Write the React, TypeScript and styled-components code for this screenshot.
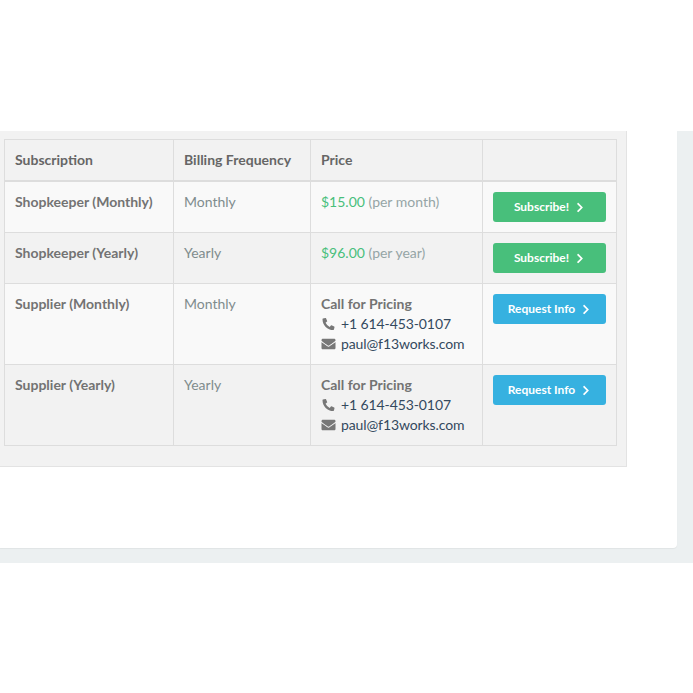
import { createGlobalStyle } from 'styled-components';
import styled from 'styled-components';
import { FaChevronRight, FaEnvelope, FaPhoneAlt } from 'react-icons/fa';

const BORDER = '#dddddd';
const GREEN = '#48bf7b';
const BLUE = '#36b1e0';

const GlobalStyle = createGlobalStyle`
  html, body {
    margin: 0;
    padding: 0;
    background: #ffffff;
  }

  body {
    font-family: Lato, 'Open Sans', sans-serif;
    font-size: 14px;
    line-height: 20px;
    color: #34495e;
  }
`;

const Section = styled.div`
  margin-top: 131px;
  padding: 0 16px 15px 0;
  background-color: #ecf0f1;
`;

const Card = styled.div`
  padding: 0 50px 81px 0;
  background-color: #ffffff;
  border-radius: 0 0 4px 0;
  box-shadow: 0 1px 1px rgba(0, 0, 0, 0.05);
`;

const Panel = styled.div`
  padding: 8px 10px 20px 4px;
  background-color: #f2f2f2;
  border-right: 1px solid #e3e3e3;
  border-bottom: 1px solid #e3e3e3;
`;

const Table = styled.table`
  width: 612px;
  table-layout: fixed;
  border-collapse: collapse;
  border: 1px solid ${BORDER};
`;

const HeadCell = styled.th`
  padding: 10px;
  text-align: left;
  font-weight: 700;
  color: #666666;
  background-color: #f2f2f2;
  border: 1px solid ${BORDER};
  border-bottom-width: 2px;
`;

const Row = styled.tr<{ $striped: boolean }>`
  background-color: ${(p) => (p.$striped ? '#f9f9f9' : '#f2f2f2')};
`;

const Cell = styled.td<{ $strong?: boolean; $muted?: boolean }>`
  padding: 10px;
  vertical-align: top;
  border: 1px solid ${BORDER};
  font-weight: ${(p) => (p.$strong ? 700 : 400)};
  color: ${(p) => (p.$strong ? '#737373' : p.$muted ? '#7f8c8d' : '#34495e')};
`;

const Amount = styled.span`
  color: ${GREEN};
`;

const Period = styled.span`
  color: #95a5a6;
`;

const PriceTitle = styled.div`
  font-weight: 700;
  color: #737373;
`;

const Contact = styled.div`
  display: flex;
  align-items: center;
  gap: 5px;
  color: #34495e;
  letter-spacing: -0.1px;

  > svg {
    width: 15px;
    flex: none;
    color: #777777;
  }
`;

const Button = styled.button<{ $color: string }>`
  display: flex;
  align-items: center;
  justify-content: center;
  gap: 6px;
  width: 100%;
  height: 30px;
  padding: 5px 10px;
  border: none;
  border-radius: 3px;
  background-color: ${(p) => p.$color};
  color: #ffffff;
  font-family: inherit;
  font-size: 12px;
  font-weight: 700;
  line-height: 18px;
  cursor: pointer;

  > svg {
    width: 10px;
    height: 11px;
  }
`;

type Plan = {
  name: string;
  frequency: string;
  amount?: string;
  period?: string;
};

const PLANS: Plan[] = [
  { name: 'Shopkeeper (Monthly)', frequency: 'Monthly', amount: '$15.00', period: '(per month)' },
  { name: 'Shopkeeper (Yearly)', frequency: 'Yearly', amount: '$96.00', period: '(per year)' },
  { name: 'Supplier (Monthly)', frequency: 'Monthly' },
  { name: 'Supplier (Yearly)', frequency: 'Yearly' },
];

function PlanRow({ plan, index }: { plan: Plan; index: number }) {
  return (
    <Row $striped={index % 2 === 0}>
      <Cell $strong>{plan.name}</Cell>
      <Cell $muted>{plan.frequency}</Cell>
      <Cell>
        {plan.amount ? (
          <>
            <Amount>{plan.amount}</Amount> <Period>{plan.period}</Period>
          </>
        ) : (
          <>
            <PriceTitle>Call for Pricing</PriceTitle>
            <Contact>
              <FaPhoneAlt size={12} />
              +1 614-453-0107
            </Contact>
            <Contact>
              <FaEnvelope size={14} />
              paul@f13works.com
            </Contact>
          </>
        )}
      </Cell>
      <Cell>
        {plan.amount ? (
          <Button $color={GREEN}>
            Subscribe! <FaChevronRight />
          </Button>
        ) : (
          <Button $color={BLUE}>
            Request Info <FaChevronRight />
          </Button>
        )}
      </Cell>
    </Row>
  );
}

function App() {
  return (
    <>
      <GlobalStyle />
      <Section>
        <Card>
          <Panel>
            <Table>
              <colgroup>
                <col style={{ width: 169 }} />
                <col style={{ width: 137 }} />
                <col style={{ width: 172 }} />
                <col style={{ width: 134 }} />
              </colgroup>
              <thead>
                <tr>
                  <HeadCell>Subscription</HeadCell>
                  <HeadCell>Billing Frequency</HeadCell>
                  <HeadCell>Price</HeadCell>
                  <HeadCell />
                </tr>
              </thead>
              <tbody>
                {PLANS.map((plan, index) => (
                  <PlanRow key={plan.name} plan={plan} index={index} />
                ))}
              </tbody>
            </Table>
          </Panel>
        </Card>
      </Section>
    </>
  );
}

export default App;
